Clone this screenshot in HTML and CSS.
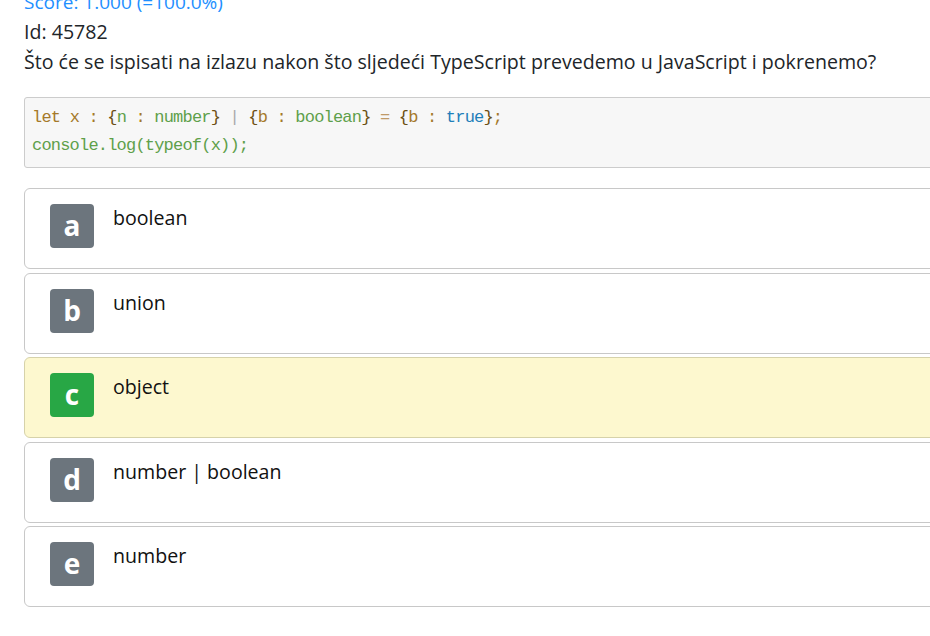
FILE: index.html
```html
<!DOCTYPE html>
<html>
<head>
<meta charset="utf-8">
<link rel="stylesheet" href="styles.css">
</head>
<body>
<div class="page">
  <div class="score">Score: 1.000 (=100.0%)</div>
  <div class="line">Id: 45782</div>
  <div class="line question">Što će se ispisati na izlazu nakon što sljedeći TypeScript prevedemo u JavaScript i pokrenemo?</div>
  <pre class="code"><span class="kw">let</span> <span class="kw">x</span> <span class="kw">:</span> <span class="br">{</span><span class="ty">n</span> <span class="kw">:</span> <span class="ty">number</span><span class="br">}</span> <span class="op">|</span> <span class="br">{</span><span class="kw">b</span> <span class="kw">:</span> <span class="ty">boolean</span><span class="br">}</span> <span class="eq">=</span> <span class="br">{</span><span class="kw">b</span> <span class="kw">:</span> <span class="bl">true</span><span class="br">}</span><span class="kw">;</span>
<span class="ty">console.log(typeof(x));</span></pre>
  <div class="options">
    <div class="option"><span class="badge">a</span><span class="label">boolean</span></div>
    <div class="option"><span class="badge">b</span><span class="label">union</span></div>
    <div class="option correct"><span class="badge ok">c</span><span class="label">object</span></div>
    <div class="option"><span class="badge">d</span><span class="label">number | boolean</span></div>
    <div class="option"><span class="badge">e</span><span class="label">number</span></div>
  </div>
</div>
</body>
</html>
```
FILE: styles.css
```css
html, body {
  margin: 0;
  padding: 0;
  overflow: hidden;
  background: #fff;
}
body {
  font-family: "Open Sans", "Noto Sans", sans-serif;
  color: #212529;
  font-size: 19.6px;
}
.page {
  width: 960px;
  padding-left: 24px;
  margin-top: -13px;
}
.score {
  color: #1e8fff;
  line-height: 30px;
  height: 30px;
  font-size: 19px;
}
.line {
  line-height: 30px;
}
.question {
  margin-bottom: 20px;
}
.code {
  margin: 0 0 20px 0;
  background: #f7f7f7;
  border: 1px solid #cccccc;
  border-radius: 3px;
  padding: 6px 7px 7px 7px;
  font-family: "Liberation Mono", monospace;
  font-size: 17px;
  letter-spacing: -0.8px;
  line-height: 28px;
  color: #a07a2a;
}
.kw { color: #a5792a; }
.br { color: #6b4f12; }
.ty { color: #5ea04a; }
.op { color: #aaaaaa; }
.eq { color: #c09a68; }
.bl { color: #1f7fba; }
.options {
  display: flex;
  flex-direction: column;
  gap: 3.5px;
}
.option {
  display: flex;
  align-items: flex-start;
  height: 81px;
  box-sizing: border-box;
  border: 1px solid #c8c8c8;
  border-radius: 6px;
  padding: 15px 25px;
  background: #fff;
}
.option.correct {
  background: #fdf8cf;
  border-color: #d6d2aa;
}
.badge {
  width: 44px;
  height: 44px;
  border-radius: 4px;
  background: #6c757d;
  color: #fff;
  font-weight: 700;
  font-size: 28px;
  display: flex;
  align-items: center;
  justify-content: center;
  line-height: 1;
  padding-bottom: 2px;
  box-sizing: border-box;
}
.badge.ok {
  background: #28a745;
}
.label {
  margin-left: 19px;
  line-height: 28px;
  color: #111;
}
```
